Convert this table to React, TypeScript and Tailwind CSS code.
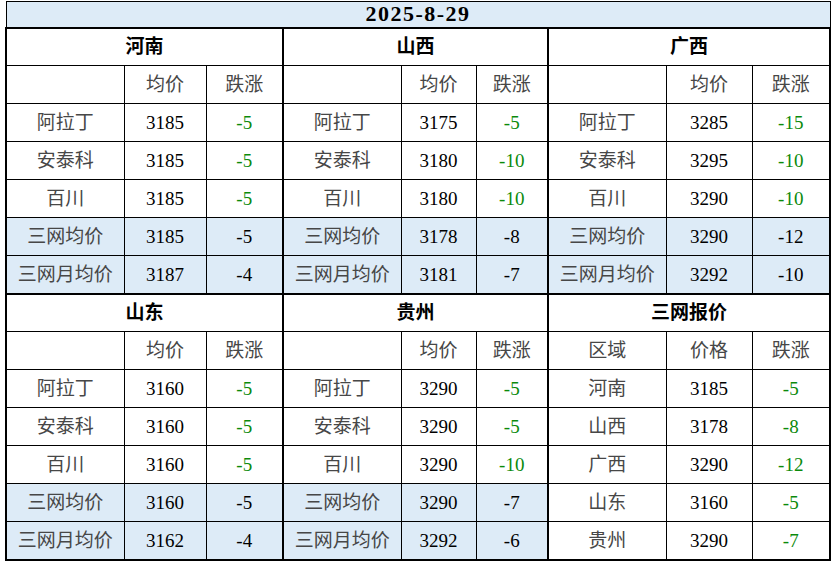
import React from "react";

interface Row {
  name: string;
  price: string;
  chg: string;
  blue?: boolean;
}

interface Block {
  title: string;
  head: [string, string, string];
  widths: [number, number, number];
  rows: Row[];
}

const avg = (name: string, price: string, chg: string): Row => ({ name, price, chg, blue: true });

const topBlocks: Block[] = [
  {
    title: "河南",
    head: ["", "均价", "跌涨"],
    widths: [118, 82, 77],
    rows: [
      { name: "阿拉丁", price: "3185", chg: "-5" },
      { name: "安泰科", price: "3185", chg: "-5" },
      { name: "百川", price: "3185", chg: "-5" },
      avg("三网均价", "3185", "-5"),
      avg("三网月均价", "3187", "-4"),
    ],
  },
  {
    title: "山西",
    head: ["", "均价", "跌涨"],
    widths: [118, 75, 72],
    rows: [
      { name: "阿拉丁", price: "3175", chg: "-5" },
      { name: "安泰科", price: "3180", chg: "-10" },
      { name: "百川", price: "3180", chg: "-10" },
      avg("三网均价", "3178", "-8"),
      avg("三网月均价", "3181", "-7"),
    ],
  },
  {
    title: "广西",
    head: ["", "均价", "跌涨"],
    widths: [118, 86, 78],
    rows: [
      { name: "阿拉丁", price: "3285", chg: "-15" },
      { name: "安泰科", price: "3295", chg: "-10" },
      { name: "百川", price: "3290", chg: "-10" },
      avg("三网均价", "3290", "-12"),
      avg("三网月均价", "3292", "-10"),
    ],
  },
];

const bottomBlocks: Block[] = [
  {
    title: "山东",
    head: ["", "均价", "跌涨"],
    widths: [118, 82, 77],
    rows: [
      { name: "阿拉丁", price: "3160", chg: "-5" },
      { name: "安泰科", price: "3160", chg: "-5" },
      { name: "百川", price: "3160", chg: "-5" },
      avg("三网均价", "3160", "-5"),
      avg("三网月均价", "3162", "-4"),
    ],
  },
  {
    title: "贵州",
    head: ["", "均价", "跌涨"],
    widths: [118, 75, 72],
    rows: [
      { name: "阿拉丁", price: "3290", chg: "-5" },
      { name: "安泰科", price: "3290", chg: "-5" },
      { name: "百川", price: "3290", chg: "-10" },
      avg("三网均价", "3290", "-7"),
      avg("三网月均价", "3292", "-6"),
    ],
  },
  {
    title: "三网报价",
    head: ["区域", "价格", "跌涨"],
    widths: [118, 86, 78],
    rows: [
      { name: "河南", price: "3185", chg: "-5" },
      { name: "山西", price: "3178", chg: "-8" },
      { name: "广西", price: "3290", chg: "-12" },
      { name: "山东", price: "3160", chg: "-5" },
      { name: "贵州", price: "3290", chg: "-7" },
    ],
  },
];

const cell = "border border-black text-center align-middle p-0 leading-none";

function Section({ blocks, first, last }: { blocks: Block[]; first?: boolean; last?: boolean }) {
  return (
    <>
      <tr className="h-[38px]">
        {blocks.map((b, bi) => (
          <td
            key={bi}
            colSpan={3}
            className={[
              cell,
              "border-l-2 font-bold text-black",
              bi === 2 ? "border-r-2" : "",
              first ? "" : "border-t-2",
            ].join(" ")}
          >
            {b.title}
          </td>
        ))}
      </tr>
      <tr className="h-[38px]">
        {blocks.map((b, bi) =>
          b.head.map((h, ci) => (
            <td
              key={`${bi}-${ci}`}
              className={[
                cell,
                "text-[#474747]",
                ci === 0 ? "border-l-2" : "",
                bi === 2 && ci === 2 ? "border-r-2" : "",
              ].join(" ")}
            >
              {h}
            </td>
          ))
        )}
      </tr>
      {[0, 1, 2, 3, 4].map((ri) => (
        <tr key={ri} className="h-[38px]">
          {blocks.map((b, bi) => {
            const r = b.rows[ri];
            const bg = r.blue ? "bg-[#ddebf7]" : "bg-white";
            const edge = last && ri === 4 ? "border-b-2" : "";
            return (
              <React.Fragment key={bi}>
                <td className={[cell, bg, edge, "border-l-2 text-[#474747]"].join(" ")}>{r.name}</td>
                <td className={[cell, bg, edge, "text-black"].join(" ")}>{r.price}</td>
                <td
                  className={[
                    cell,
                    bg,
                    edge,
                    r.blue ? "text-black" : "text-[#0b8a0b]",
                    bi === 2 ? "border-r-2" : "",
                  ].join(" ")}
                >
                  {r.chg}
                </td>
              </React.Fragment>
            );
          })}
        </tr>
      ))}
    </>
  );
}

export default function App() {
  const widths = topBlocks.flatMap((b) => b.widths);
  return (
    <div className="w-[836px] h-[562px] bg-white overflow-hidden pl-[5px] pt-[1px]">
      <table
        className="border-collapse table-fixed text-[19px]"
        style={{ fontFamily: "'Liberation Serif', 'Noto Sans CJK SC', serif" }}
      >
        <colgroup>
          {widths.map((w, i) => (
            <col key={i} style={{ width: w }} />
          ))}
        </colgroup>
        <tbody>
          <tr className="h-[26px]">
            <td
              colSpan={9}
              className={[
                cell,
                "bg-[#ddebf7] border-b-2 font-bold text-[22px] tracking-[1.5px] text-black",
              ].join(" ")}
            >
              2025-8-29
            </td>
          </tr>
          <Section blocks={topBlocks} first />
          <Section blocks={bottomBlocks} last />
        </tbody>
      </table>
    </div>
  );
}
